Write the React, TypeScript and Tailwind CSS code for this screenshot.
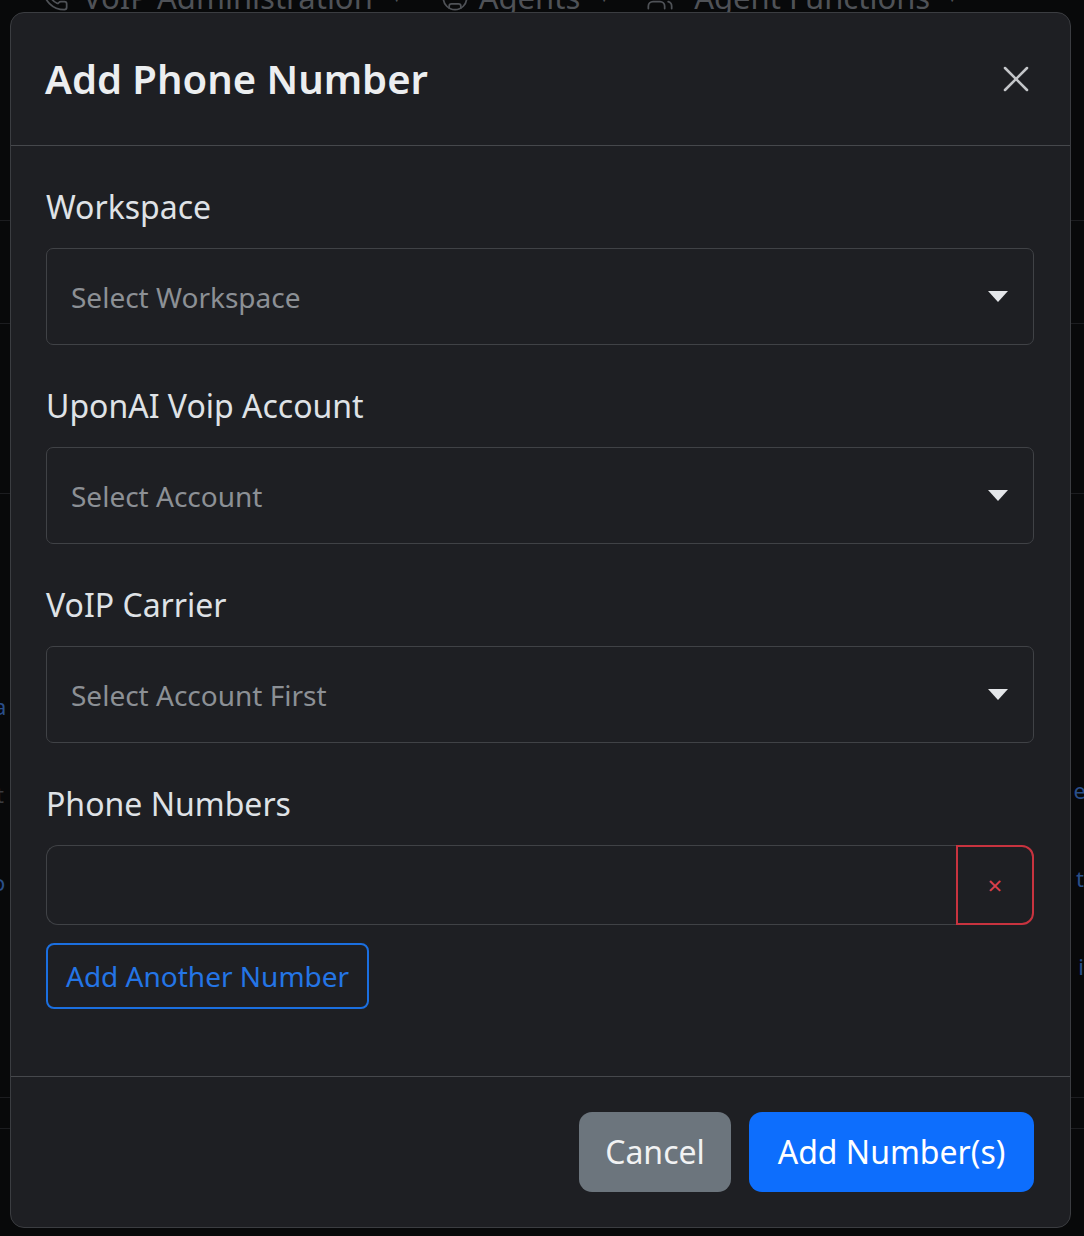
import { X, PhoneCall, CircleUser, Users } from "lucide-react";

// 下拉框（仿 bootstrap form-select，dark）
function FakeSelect({ placeholder }: { placeholder: string }) {
  return (
    <div className="h-[97px] flex items-center justify-between pl-[24px] pr-[25px] border border-[#404246] rounded-[7px] bg-[#1e1f23]">
      <span className="text-[28px] text-[#8c9095]">{placeholder}</span>
      <svg width="20" height="11" viewBox="0 0 20 11">
        <path d="M0 0 L20 0 L10 11 Z" fill="#e4e6e9" />
      </svg>
    </div>
  );
}

function Field({ label, children }: { label: string; children: React.ReactNode }) {
  return (
    <div className="mb-[37px]">
      <div className="text-[32px] leading-[48px] text-[#dfe2e6] mb-[17px]">{label}</div>
      {children}
    </div>
  );
}

export default function App() {
  return (
    <div className="relative h-[1236px] w-full overflow-hidden bg-[#08090a] font-['Noto_Sans',sans-serif]">
      {/* 背后页面：被 modal 盖住的导航和表格行 */}
      <div className="absolute left-[41px] top-[-18px] flex items-center text-[31px] leading-none text-[#4f5257]">
        <PhoneCall className="w-[28px] h-[28px] mr-[14px]" strokeWidth={1.5} />
        <span>VoIP Administration</span>
        <span className="text-[12px] ml-[18px] mr-[38px]">▼</span>
        <CircleUser className="w-[28px] h-[28px] mr-[10px]" strokeWidth={1.5} />
        <span>Agents</span>
        <span className="text-[12px] ml-[18px] mr-[36px]">▼</span>
        <Users className="w-[28px] h-[28px] mr-[20px]" strokeWidth={1.5} />
        <span>Agent Functions</span>
        <span className="text-[12px] ml-[16px]">▼</span>
      </div>
      <div className="absolute left-0 right-0 top-[220px] h-px bg-[#1c1d20]" />
      <div className="absolute left-0 right-0 top-[323px] h-px bg-[#1c1d20]" />
      <div className="absolute left-0 right-0 top-[493px] h-px bg-[#1c1d20]" />
      <div className="absolute left-0 right-0 top-[1097px] h-px bg-[#1c1d20]" />
      <div className="absolute left-0 right-0 top-[1128px] h-px bg-[#1c1d20]" />
      <span className="absolute left-[-6px] top-[690px] text-[22px] text-[#2a4f8a]">a</span>
      <span className="absolute left-[-4px] top-[778px] text-[22px] text-[#3a3c40]">t</span>
      <span className="absolute left-[-8px] top-[866px] text-[22px] text-[#2a4f8a]">o</span>
      <span className="absolute right-[-2px] top-[774px] text-[22px] text-[#2a4f8a]">e</span>
      <span className="absolute right-[0px] top-[862px] text-[22px] text-[#2a4f8a]">t</span>
      <span className="absolute right-[0px] top-[950px] text-[22px] text-[#2a4f8a]">i</span>

      {/* modal */}
      <div className="relative pl-[10px] pt-[12px]">
        <div className="w-[1061px] border border-[#3b3d41] rounded-[14px] bg-[#1e1f23]">
          {/* header */}
          <div className="flex items-center justify-between pl-[34px] pr-[32px] py-[36px] border-b border-[#46484c]">
            <h5 className="text-[40px] leading-[60px] font-semibold text-[#eceef0]">Add Phone Number</h5>
            <X className="w-[44px] h-[44px] text-[#c4c6c9]" strokeWidth={1.4} />
          </div>

          {/* body */}
          <div className="pl-[35px] pr-[36px] pt-[37px] pb-[67px]">
            <Field label="Workspace">
              <FakeSelect placeholder="Select Workspace" />
            </Field>
            <Field label="UponAI Voip Account">
              <FakeSelect placeholder="Select Account" />
            </Field>
            <Field label="VoIP Carrier">
              <FakeSelect placeholder="Select Account First" />
            </Field>
            <div>
              <div className="text-[32px] leading-[48px] text-[#dfe2e6] mb-[17px]">Phone Numbers</div>
              <div className="flex h-[80px]">
                <div className="flex-1 border border-[#404246] rounded-l-[12px] border-r-0 bg-[#1e1f23]" />
                <div className="w-[78px] flex items-center justify-center border-2 border-[#c8333f] rounded-r-[12px]">
                  <span className="text-[26px] leading-none text-[#d9404c]">×</span>
                </div>
              </div>
              <div className="mt-[18px]">
                <button className="h-[66px] px-[18px] border-2 border-[#1b6fe0] rounded-[8px] text-[28px] text-[#2475e6]">
                  Add Another Number
                </button>
              </div>
            </div>
          </div>

          {/* footer */}
          <div className="flex justify-end gap-[18px] pl-[35px] pr-[36px] pt-[35px] pb-[35px] border-t border-[#46484c]">
            <button className="h-[80px] w-[152px] rounded-[13px] bg-[#6c757d] text-[32px] text-[#f1f2f3]">Cancel</button>
            <button className="h-[80px] w-[285px] rounded-[13px] bg-[#0d6efd] text-[32px] text-white">Add Number(s)</button>
          </div>
        </div>
      </div>
    </div>
  );
}
